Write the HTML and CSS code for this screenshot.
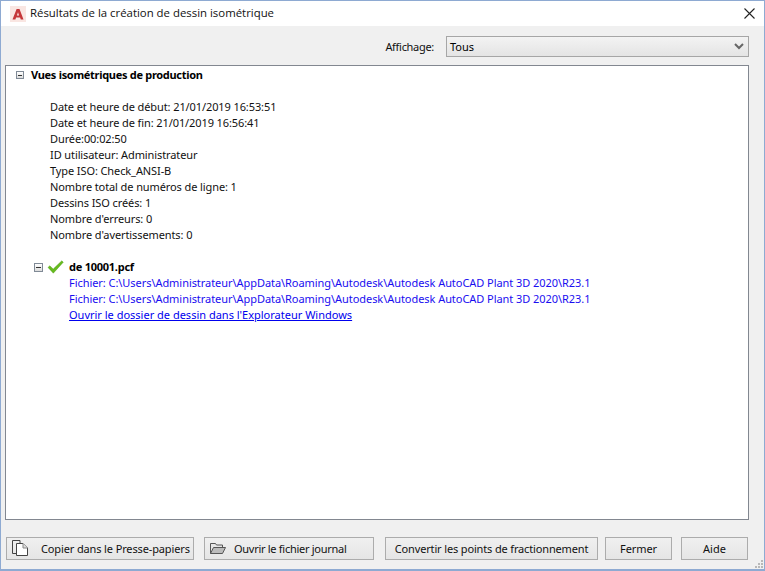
FILE: index.html
```html
<!DOCTYPE html>
<html lang="fr">
<head>
<meta charset="utf-8">
<title>Résultats de la création de dessin isométrique</title>
<link rel="stylesheet" href="styles.css">
</head>
<body>
<div class="window">
  <header class="titlebar">
    <svg class="app-icon" width="16" height="16" viewBox="0 0 16 16"><rect width="16" height="16" fill="#f9e6e2"/><path d="M2.500 13.500 6.600 3h2.900l4 10.500h-2.700l-.7-2H6.100l-.7 2z" fill="#c5373a"/><path d="M6.900 9.500h2.200L8 6.300z" fill="#f9e6e2"/></svg>
    <span class="title">Résultats de la création de dessin isométrique</span>
    <svg class="close" width="11" height="11" viewBox="0 0 11 11"><path d="M.5.5l10 10M10.500.5l-10 10" stroke="#222" stroke-width="1.100" fill="none"/></svg>
  </header>
  <div class="body">
    <div class="filter">
      <span class="filter-label">Affichage:</span>
      <div class="select">
        <span>Tous</span>
        <svg width="10" height="7" viewBox="0 0 10 7"><path d="M1 1l4 4 4-4" stroke="#666" stroke-width="2" fill="none"/></svg>
      </div>
    </div>
    <main class="panel">
      <div class="tree-head">
        <span class="toggle toggle-small"></span>
        <strong>Vues isométriques de production</strong>
      </div>
      <ul class="info">
        <li>Date et heure de début: 21/01/2019 16:53:51</li>
        <li>Date et heure de fin: 21/01/2019 16:56:41</li>
        <li>Durée:00:02:50</li>
        <li>ID utilisateur: Administrateur</li>
        <li>Type ISO: Check_ANSI-B</li>
        <li>Nombre total de numéros de ligne: 1</li>
        <li>Dessins ISO créés: 1</li>
        <li>Nombre d'erreurs: 0</li>
        <li>Nombre d'avertissements: 0</li>
      </ul>
      <div class="file-head">
        <span class="toggle"></span>
        <svg class="check" width="17" height="14" viewBox="0 0 17 14"><path d="M1 7.400 2.800 5.800 6.200 9 14.800.8 16.300 2.200 6.300 13.200z" fill="#66bb1f" stroke="#4c9a12" stroke-width=".4"/></svg>
        <strong>de 10001.pcf</strong>
      </div>
      <div class="files">
        <div class="path">Fichier: C:\Users\Administrateur\AppData\Roaming\Autodesk\Autodesk AutoCAD Plant 3D 2020\R23.1</div>
        <div class="path">Fichier: C:\Users\Administrateur\AppData\Roaming\Autodesk\Autodesk AutoCAD Plant 3D 2020\R23.1</div>
        <a class="open-link" href="#">Ouvrir le dossier de dessin dans l'Explorateur Windows</a>
      </div>
    </main>
    <footer class="actions">
      <button class="btn btn-copy">
        <svg width="16" height="16" viewBox="0 0 16 16"><path d="M4 13.500H.5V.5h7.500V3" fill="none" stroke="#444"/><path d="M4.500 3.500h6.500l4.500 4.500v7.500h-11z" fill="#fff" stroke="#444"/><path d="M11 3.500V8h4.500" fill="#ddd" stroke="#888"/></svg>
        <span>Copier dans le Presse-papiers</span>
      </button>
      <button class="btn btn-open">
        <svg width="16" height="11" viewBox="0 0 16 11"><path d="M.5 10.500V.5h5l1 1.500h6v2.500" fill="#e6e6e6" stroke="#555"/><path d="M.5 10.500 3.500 4.500h12l-3 6z" fill="#bbb" stroke="#555"/></svg>
        <span>Ouvrir le fichier journal</span>
      </button>
      <button class="btn btn-convert">Convertir les points de fractionnement</button>
      <button class="btn btn-close">Fermer</button>
      <button class="btn btn-help">Aide</button>
    </footer>
  </div>
  <svg class="grip" width="9" height="9" viewBox="0 0 9 9"><path d="M6 0h2v2H6zM3 3h2v2H3zM6 3h2v2H6zM0 6h2v2H0zM3 6h2v2H3zM6 6h2v2H6z" fill="#b8b8b8"/></svg>
</div>
</body>
</html>
```
FILE: styles.css
```css
* { box-sizing: border-box; }
html, body { margin: 0; height: 100%; }
body {
  font-family: "Noto Sans", "Liberation Sans", sans-serif;
  font-size: 11px;
  color: #000;
  background: #f0f0f0;
}
.window {
  position: relative;
  width: 765px;
  height: 571px;
  border: 1px solid #8eaad2;
  border-bottom-width: 2px;
  display: flex;
  flex-direction: column;
  background: #f0f0f0;
}
.grip {
  position: absolute;
  right: 0;
  bottom: 0;
}
.titlebar {
  height: 25px;
  flex: none;
  background: #fff;
  display: flex;
  align-items: center;
  padding: 0 9px;
}
.app-icon { flex: none; }
.title {
  margin: -2px 0 0 4px;
  font-family: "Open Sans", "Liberation Sans", sans-serif;
  font-size: 11.4px;
  flex: 1;
  color: #111;
}
.body {
  flex: 1;
  display: flex;
  flex-direction: column;
  padding: 10px 15px 8px 4px;
}
.filter {
  display: flex;
  align-items: center;
  justify-content: flex-end;
  height: 21px;
  gap: 12px;
}
.filter-label { color: #111; letter-spacing: -0.3px; }
.select {
  width: 303px;
  height: 21px;
  border: 1px solid #a6a6a6;
  background: linear-gradient(#f3f3f3, #e4e4e4);
  display: flex;
  align-items: center;
  justify-content: space-between;
  padding: 0 4px 0 3px;
}
.panel {
  margin-top: 8px;
  height: 455px;
  background: #fff;
  border: 1px solid #828790;
  padding: 1px 0 0 10px;
  line-height: 16px;
}
.tree-head, .file-head {
  display: flex;
  align-items: center;
  height: 16px;
}
.toggle {
  width: 9px;
  height: 9px;
  border: 1px solid #808a96;
  background: linear-gradient(#fff, #dcdcdc);
  position: relative;
  flex: none;
}
.toggle-small { width: 8px; height: 8px; }
.toggle::after {
  content: "";
  position: absolute;
  left: 1px;
  right: 1px;
  top: 3px;
  height: 1px;
  background: #333;
}
.tree-head strong { margin-left: 7px; letter-spacing: -0.3px; }
.info {
  list-style: none;
  margin: 16px 0 0;
  padding: 0 0 0 34px;
  color: #111;
  letter-spacing: -0.1px;
}
.file-head { margin: 16px 0 0 18px; }
.check { margin-left: 4px; flex: none; }
.file-head strong { margin-left: 5px; letter-spacing: -0.25px; }
.files {
  padding-left: 53px;
  display: flex;
  flex-direction: column;
  align-items: flex-start;
}
.path { color: #1a0df0; white-space: nowrap; letter-spacing: -0.055px; }
.open-link { color: #0000ee; text-decoration: underline; }
.actions {
  margin-top: 17px;
  display: flex;
  height: 23px;
  padding-left: 1px;
}
.btn {
  font: inherit;
  color: #111;
  height: 23px;
  padding: 0;
  border: 1px solid #acacac;
  background: linear-gradient(#f0f0f0, #e5e5e5);
  display: flex;
  align-items: center;
  justify-content: center;
  flex: none;
  white-space: nowrap;
}
.btn-copy { width: 188px; justify-content: flex-start; padding: 0 0 1px 5px; gap: 13px; letter-spacing: -0.13px; }
.btn-open { width: 170px; margin-left: 10px; justify-content: flex-start; padding-left: 5px; gap: 8px; letter-spacing: -0.28px; }
.btn-convert { width: 213px; margin-left: 11px; letter-spacing: -0.15px; }
.btn-close { width: 67px; margin-left: 7px; letter-spacing: -0.1px; }
.btn-help { width: 67px; margin-left: 9px; }
```
